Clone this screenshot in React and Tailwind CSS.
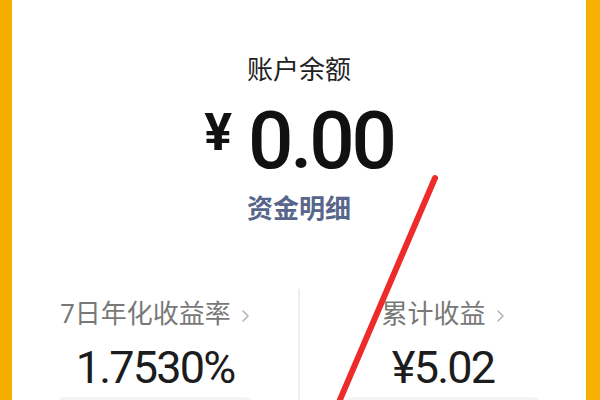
import React from 'react';

const font = { fontFamily: 'Roboto, "Noto Sans CJK SC", sans-serif' };

function Chevron() {
  return (
    <svg width="9" height="14" viewBox="0 0 9 14" className="ml-[10px] mt-[4px]">
      <path d="M2 2 L7 7 L2 12" fill="none" stroke="#b5b5b5" strokeWidth="1.6" strokeLinecap="round" strokeLinejoin="round" />
    </svg>
  );
}

function Stat({ label, value }) {
  return (
    <div className="flex-1 flex flex-col items-center pt-[12px]">
      <div className="flex items-center text-[26px] leading-none text-[#787878]">
        <span>{label}</span>
        <Chevron />
      </div>
      <div className="mt-[18px] text-[45px] leading-none text-[#1c1c1c] tracking-[-0.04em]">{value}</div>
      <div className="mt-[7px] h-[20px] w-[200px] rounded-t-[10px] bg-[#f3f3f3]" />
    </div>
  );
}

export default function App() {
  return (
    <div className="relative w-[600px] h-[400px] overflow-hidden flex bg-[#f5b000]" style={font}>
      <div className="w-[12px] shrink-0 bg-[#f4ae00]" />
      <div className="flex-1 bg-white flex flex-col items-center">
        <div className="pt-[57px] text-[26px] leading-none text-[#222]">账户余额</div>
        <div className="mt-[18px] flex items-start">
          <span className="mt-[6px] text-[52px] leading-none font-bold text-[#111]">¥</span>
          <span className="ml-[16px] text-[80px] leading-none font-medium text-[#111] tracking-[-0.04em]">0.00</span>
        </div>
        <div className="mt-[15px] text-[26px] leading-none font-bold text-[#57668a]">资金明细</div>
        <div className="mt-[67px] w-full flex flex-1">
          <Stat label="7日年化收益率" value="1.7530%" />
          <div className="w-[2px] bg-[#efefef]" />
          <Stat label="累计收益" value="¥5.02" />
        </div>
      </div>
      <div className="w-[14px] shrink-0 bg-[#f5b000]" />
      <svg className="absolute inset-0 pointer-events-none" width="600" height="400" viewBox="0 0 600 400">
        <line x1="435" y1="178" x2="339" y2="402" stroke="#ee2b2b" strokeWidth="6" strokeLinecap="round" />
      </svg>
    </div>
  );
}
